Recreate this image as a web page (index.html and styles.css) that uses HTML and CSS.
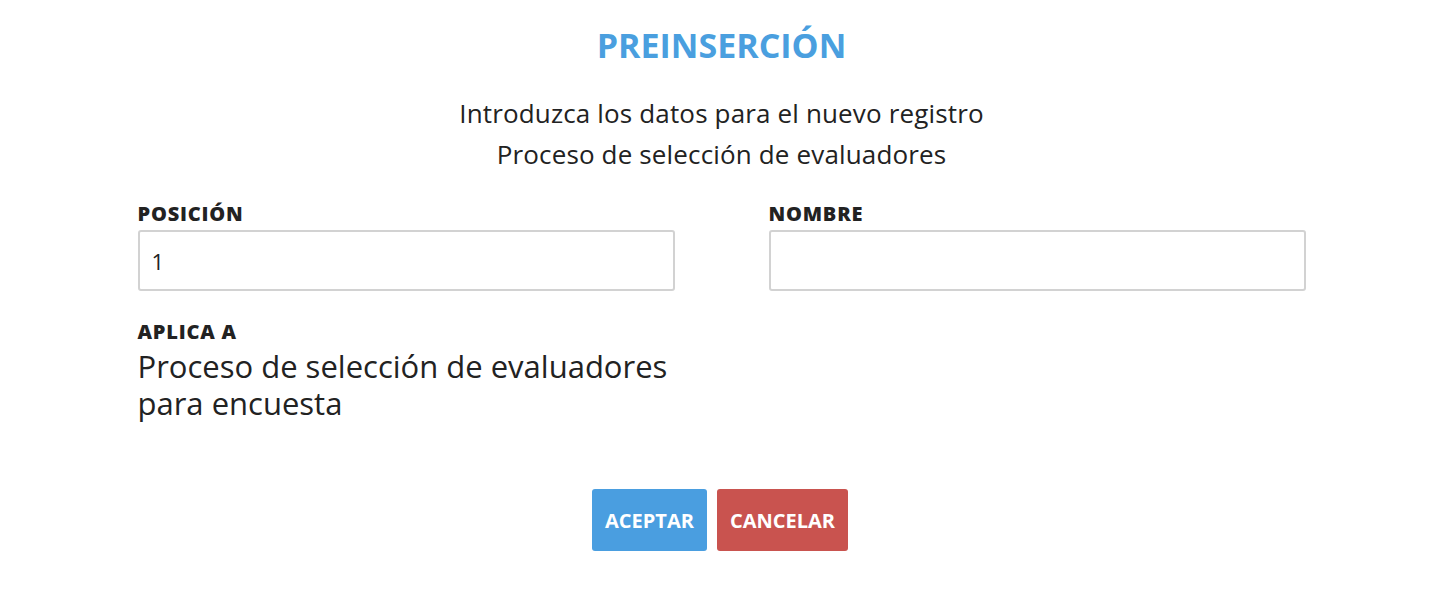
FILE: index.html
```html
<!DOCTYPE html>
<html lang="es">
<head>
<meta charset="utf-8">
<title>Preinserción</title>
<link rel="stylesheet" href="styles.css">
</head>
<body>
<main class="dialog">
  <h1 class="title">PREINSERCIÓN</h1>
  <p class="intro">Introduzca los datos para el nuevo registro</p>
  <p class="intro">Proceso de selección de evaluadores</p>
  <div class="fields">
    <div class="field">
      <label class="label" for="pos">POSICIÓN</label>
      <input class="input" id="pos" type="text" value="1">
    </div>
    <div class="field">
      <label class="label" for="nom">NOMBRE</label>
      <input class="input" id="nom" type="text" value="">
    </div>
    <div class="field">
      <div class="label">APLICA A</div>
      <div class="value">Proceso de selección de evaluadores para encuesta</div>
    </div>
  </div>
  <div class="actions">
    <button class="btn btn-accept" type="button">ACEPTAR</button>
    <button class="btn btn-cancel" type="button">CANCELAR</button>
  </div>
</main>
</body>
</html>
```
FILE: styles.css
```css
* { box-sizing: border-box; }
html, body { margin: 0; padding: 0; background: #fff; }
body {
  font-family: "Open Sans", "Liberation Sans", sans-serif;
  color: #222;
  padding-left: 3px;
}
.dialog {
  width: 1168px;
  margin: 0 auto;
  padding-top: 23px;
  display: flex;
  flex-direction: column;
  align-items: stretch;
}
.title {
  margin: 0 0 25px;
  text-align: center;
  font-size: 34px;
  font-weight: 700;
  line-height: 44px;
  color: #4a9fdf;
}
.intro {
  margin: 0;
  text-align: center;
  font-size: 26px;
  line-height: 41px;
  letter-spacing: 0.15px;
  color: #222;
}
.intro:first-of-type { margin-top: 1px; }
.fields {
  margin-top: 26px;
  display: grid;
  grid-template-columns: 537px 537px;
  column-gap: 94px;
  row-gap: 28px;
}
.field { display: flex; flex-direction: column; }
.label {
  font-size: 20px;
  font-weight: 800;
  line-height: 26px;
  letter-spacing: 0.8px;
  color: #222;
  margin-bottom: 3px;
}
.input {
  height: 61px;
  width: 100%;
  border: 2px solid #d2d2d2;
  border-radius: 3px;
  padding: 0 12px;
  font-family: inherit;
  font-size: 22px;
  color: #222;
  background: #fff;
  outline: none;
}
.value {
  font-size: 31px;
  line-height: 37px;
  color: #222;
  margin-top: 0;
}
.actions {
  margin-top: 67px;
  display: flex;
  justify-content: center;
  gap: 10px;
  padding-right: 3px;
}
.btn {
  height: 62px;
  border: none;
  border-radius: 3px;
  padding: 0 13px;
  font-family: inherit;
  font-size: 20px;
  font-weight: 700;
  color: #fff;
  cursor: pointer;
}
.btn-accept { background: #4a9ee0; }
.btn-cancel { background: #c9534f; }
```
